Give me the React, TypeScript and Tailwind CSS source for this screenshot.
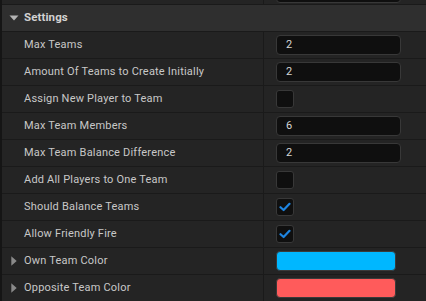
import React from "react";

type Row =
  | { label: string; kind: "number"; value: string }
  | { label: string; kind: "check"; checked: boolean }
  | { label: string; kind: "color"; color: string };

const rows: Row[] = [
  { label: "Max Teams", kind: "number", value: "2" },
  { label: "Amount Of Teams to Create Initially", kind: "number", value: "2" },
  { label: "Assign New Player to Team", kind: "check", checked: false },
  { label: "Max Team Members", kind: "number", value: "6" },
  { label: "Max Team Balance Difference", kind: "number", value: "2" },
  { label: "Add All Players to One Team", kind: "check", checked: false },
  { label: "Should Balance Teams", kind: "check", checked: true },
  { label: "Allow Friendly Fire", kind: "check", checked: true },
  { label: "Own Team Color", kind: "color", color: "#00b7ff" },
  { label: "Opposite Team Color", kind: "color", color: "#ff5b5b" }
];

function Value({ row }: { row: Row }) {
  if (row.kind === "number") {
    return (
      <div className="flex h-[20px] w-[125px] items-center rounded-[4px] border border-[#383838] bg-[#0f0f0f] pl-[9px] text-[11px] text-[#d6d6d6]">
        {row.value}
      </div>
    );
  }
  if (row.kind === "check") {
    return (
      <div className="flex h-[18px] w-[18px] items-center justify-center rounded-[3px] border border-[#383838] bg-[#0f0f0f]">
        {row.checked && (
          <svg width="12" height="10" viewBox="0 0 12 10" aria-hidden="true">
            <path d="M1.5 5.2 L4.6 8 L10.5 1.8" fill="none" stroke="#1e84e0" strokeWidth="2.2" strokeLinecap="round" strokeLinejoin="round" />
          </svg>
        )}
      </div>
    );
  }
  return (
    <div
      className="h-[20px] w-[120px] rounded-[4px] border border-[#3a3a3a]"
      style={{ backgroundColor: row.color }}
    />
  );
}

export default function App() {
  return (
    <div
      className="flex h-[301px] w-[426px] overflow-hidden bg-[#1a1a1a]"
      style={{ fontFamily: "Roboto, 'Liberation Sans', sans-serif" }}
    >
      <div className="w-[2px] shrink-0 bg-[#151515]" />
      <div className="flex min-w-0 flex-1 flex-col">
        {/* tail of the row above */}
        <div className="flex h-[5px] shrink-0 border-b border-[#1a1a1a] bg-[#242424]">
          <div className="w-[261px] shrink-0" />
          <div className="w-px shrink-0 bg-[#1a1a1a]" />
          <div className="flex flex-1 items-end pl-[12px] pb-[1px]">
            <div className="h-[20px] w-[125px] shrink-0 rounded-[4px] border border-[#383838] bg-[#0f0f0f]" />
          </div>
        </div>

        <div className="flex h-[27px] shrink-0 items-center border-b border-[#1a1a1a] bg-[#2f2f2f]">
          <div className="flex w-[22px] justify-center pl-[1px]">
            <svg width="10" height="6" viewBox="0 0 10 6" aria-hidden="true">
              <path d="M0.5 0.5 H9.5 L5 5.5 Z" fill="#b4b4b4" />
            </svg>
          </div>
          <span className="text-[11.5px] font-bold tracking-[0.1px] text-[#d2d2d2]">Settings</span>
        </div>

        {rows.map((row) => (
          <div key={row.label} className="flex h-[27px] shrink-0 border-b border-[#1a1a1a] bg-[#242424]">
            <div className="flex w-[261px] shrink-0 items-center">
              <div className="flex w-[22px] justify-center pl-[1px]">
                {row.kind === "color" && (
                  <svg width="6" height="10" viewBox="0 0 6 10" aria-hidden="true">
                    <path d="M0.3 0.3 L5.7 5 L0.3 9.7 Z" fill="#8a8a8a" />
                  </svg>
                )}
              </div>
              <span className="text-[11px] tracking-[0.2px] text-[#c8c8c8]">{row.label}</span>
            </div>
            <div className="w-px shrink-0 bg-[#1a1a1a]" />
            <div className="flex flex-1 items-center pl-[12px]">
              <Value row={row} />
            </div>
          </div>
        ))}
      </div>
    </div>
  );
}
